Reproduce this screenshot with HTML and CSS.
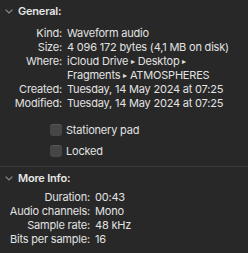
FILE: index.html
```html
<!DOCTYPE html>
<html lang="en">
<head>
    <meta charset="UTF-8">
    <meta name="viewport" content="width=device-width, initial-scale=1.0">
    <title>Info</title>
    <link rel="stylesheet" href="styles.css">
</head>
<body>
    <section class="panel general">
        <div class="panel-head">
            <svg class="chevron" width="8" height="5" viewBox="0 0 8 5"><path d="M0.6 0.6 L4 4 L7.4 0.6" fill="none" stroke="#8c8c8c" stroke-width="1.2"/></svg>
            <span>General:</span>
        </div>
        <div class="info">
            <span class="label">Kind:</span><span>Waveform audio</span>
            <span class="label">Size:</span><span>4 096 172 bytes (4,1 MB on disk)</span>
            <span class="label">Where:</span><span>iCloud Drive <i class="sep">▸</i> Desktop <i class="sep">▸</i><br>Fragments <i class="sep">▸</i> ATMOSPHERES</span>
            <span class="label">Created:</span><span>Tuesday, 14 May 2024 at 07:25</span>
            <span class="label">Modified:</span><span>Tuesday, 14 May 2024 at 07:25</span>
        </div>
        <div class="options">
            <label class="check"><span class="box"></span>Stationery pad</label>
            <label class="check"><span class="box"></span>Locked</label>
        </div>
    </section>

    <section class="panel more">
        <div class="panel-head">
            <svg class="chevron" width="8" height="5" viewBox="0 0 8 5"><path d="M0.6 0.6 L4 4 L7.4 0.6" fill="none" stroke="#8c8c8c" stroke-width="1.2"/></svg>
            <span>More Info:</span>
        </div>
        <div class="info">
            <span class="label">Duration:</span><span>00:43</span>
            <span class="label">Audio channels:</span><span>Mono</span>
            <span class="label">Sample rate:</span><span>48 kHz</span>
            <span class="label">Bits per sample:</span><span>16</span>
        </div>
    </section>
</body>
</html>
```

FILE: styles.css
```css
body {
    margin: 0;
    background-color: #282828;
    color: #e2e2e2;
    font-family: Inter, 'Liberation Sans', sans-serif;
    font-size: 11px;
    line-height: 14px;
    letter-spacing: -0.2px;
}

.panel-head {
    display: flex;
    align-items: center;
    gap: 5px;
    height: 22px;
    padding-left: 5px;
    color: #e6e6e6;
    font-weight: 600;
}

.chevron {
    margin-top: 1px;
}

/* label / value rows */
.info {
    display: grid;
    grid-template-columns: 62px 1fr;
    column-gap: 5px;
    white-space: nowrap;
}

.label {
    text-align: right;
}

.sep {
    font-style: normal;
    font-size: 8px;
    line-height: 1;
    vertical-align: 1px;
}

.general .info {
    padding-top: 4px;
}

.more .info {
    grid-template-columns: 90px 1fr;
    padding-top: 1px;
}

/* checkboxes */
.options {
    display: flex;
    flex-direction: column;
    gap: 7px;
    padding: 13px 0 8px 50px;
}

.check {
    display: flex;
    align-items: center;
    gap: 4px;
}

.box {
    width: 12px;
    height: 12px;
    border-radius: 3px;
    background-color: #464646;
    border-top: 1px solid #555;
    box-sizing: border-box;
}

.more {
    border-top: 1px solid #3a3a3a;
}
```
